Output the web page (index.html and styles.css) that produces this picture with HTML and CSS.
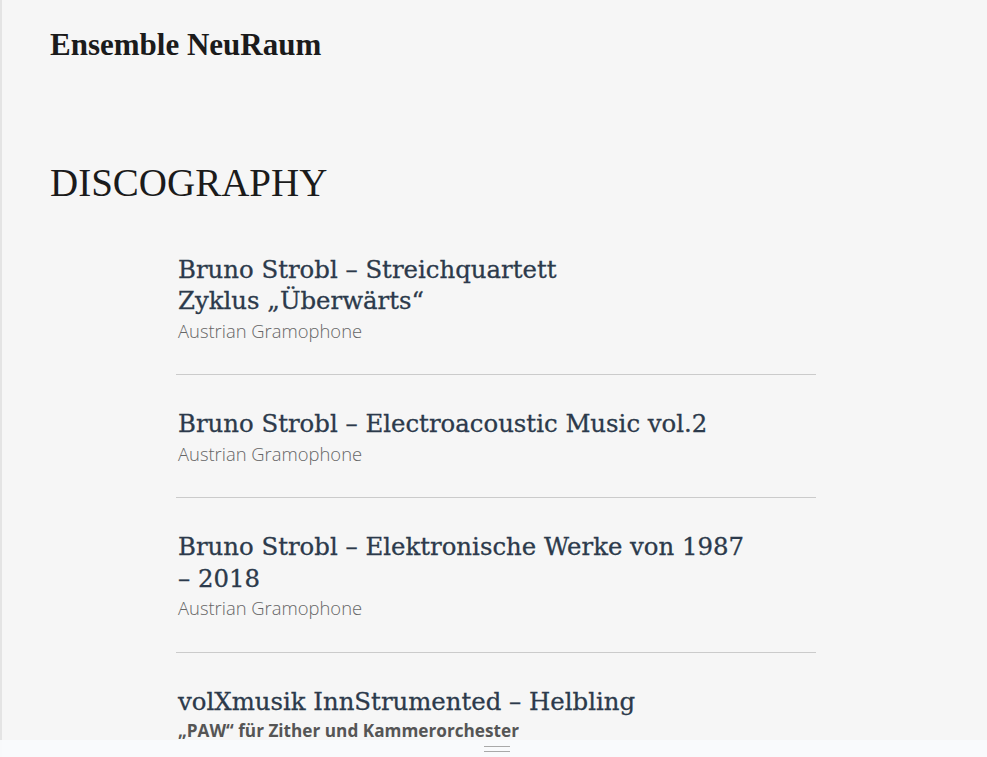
FILE: index.html
```html
<!DOCTYPE html>
<html lang="de">
  <head>
    <meta charset="UTF-8" />
    <meta name="viewport" content="width=device-width, initial-scale=1.0" />
    <title>Discography – Ensemble NeuRaum</title>
    <link rel="stylesheet" href="styles.css">
  </head>

  <body>
    <div class="page">
      <header class="site-header">
        <a class="site-title" href="#">Ensemble NeuRaum</a>
      </header>

      <main class="content">
        <h1 class="page-title">DISCOGRAPHY</h1>

        <ul class="records">
          <li class="record">
            <h2 class="record-title">Bruno Strobl – Streichquartett<br>Zyklus „Überwärts“</h2>
            <p class="record-label">Austrian Gramophone</p>
          </li>
          <li class="record">
            <h2 class="record-title">Bruno Strobl – Electroacoustic Music vol.2</h2>
            <p class="record-label">Austrian Gramophone</p>
          </li>
          <li class="record">
            <h2 class="record-title">Bruno Strobl – Elektronische Werke von 1987 <span class="nowrap">– 2018</span></h2>
            <p class="record-label">Austrian Gramophone</p>
          </li>
          <li class="record">
            <h2 class="record-title">volXmusik InnStrumented – Helbling</h2>
            <p class="record-label strong">„PAW“ für Zither und Kammerorchester</p>
          </li>
        </ul>
      </main>
    </div>

    <div class="bottom-bar">
      <span class="handle"></span>
    </div>
  </body>
</html>
```

FILE: styles.css
```css
html, body {
  margin: 0;
  padding: 0;
  background: #f6f6f6;
}

.page {
  min-height: 100vh;
  border-left: 2px solid #e4e4e4;
  padding: 26px 48px 80px;
  box-sizing: border-box;
}

.site-header {
  height: 134px;
}

.site-title {
  font-family: "Liberation Serif", serif;
  font-weight: bold;
  font-size: 31px;
  line-height: 1.2;
  color: #1b1b1b;
  text-decoration: none;
}

.page-title {
  font-family: "Liberation Serif", serif;
  font-weight: normal;
  font-size: 39px;
  line-height: 1.2;
  color: #1b1b1b;
  margin: 0 0 14px;
}

.records {
  list-style: none;
  margin: 0 0 0 126px;
  padding: 0;
  width: 640px;
}

.record {
  padding: 33px 2px 30.5px;
  border-bottom: 1px solid #cbcbcb;
}

.record-title {
  font-family: "DejaVu Serif", serif;
  font-weight: normal;
  font-size: 24.4px;
  line-height: 31.5px;
  color: #2c3a4b;
  -webkit-text-stroke: 0.3px #2c3a4b;
  margin: 0;
  max-width: 600px;
}

.nowrap {
  white-space: nowrap;
}

.record-label {
  font-family: "Open Sans", sans-serif;
  font-weight: 300;
  font-size: 18.4px;
  line-height: 26px;
  color: #666;
  margin: 1px 0 0;
}

.record-label.strong {
  font-weight: bold;
  font-size: 17.2px;
  color: #555;
}

.bottom-bar {
  position: fixed;
  left: 0;
  right: 0;
  bottom: 0;
  height: 17px;
  background: rgba(249, 250, 252, 0.96);
  display: flex;
  justify-content: center;
  align-items: center;
}

.handle {
  width: 26px;
  height: 6px;
  margin-left: 7px;
  border-top: 1.5px solid #a9a9a9;
  border-bottom: 1.5px solid #a9a9a9;
  box-sizing: border-box;
}
```
